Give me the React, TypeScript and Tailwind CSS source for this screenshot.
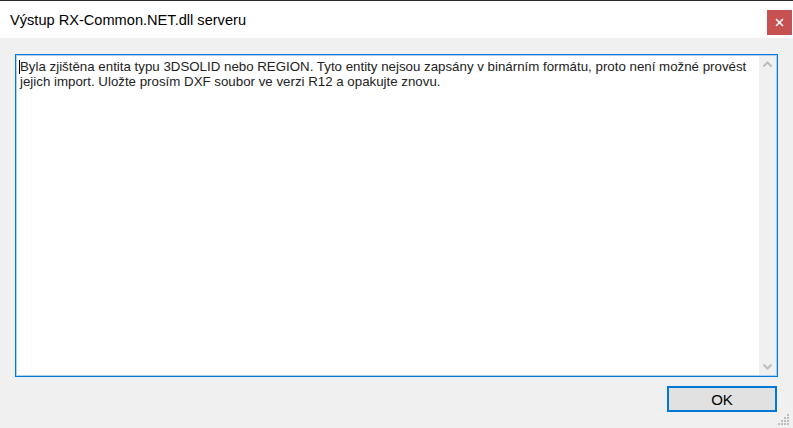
import React from 'react';

export default function App() {
  return (
    <div className="w-[793px] h-[428px] flex flex-col bg-[#f0f0f0] overflow-hidden font-['Liberation_Sans',Arial,sans-serif]">
      {/* Title bar */}
      <div className="h-[38px] bg-white border-t border-[#2b2b2b] flex items-start shrink-0">
        <div className="flex-1 pl-[10px] pt-[10px] text-[14.6px] text-black leading-[18px]">
          Výstup RX-Common.NET.dll serveru
        </div>
        <div className="mt-[9px] mr-[1px] w-[25px] h-[25px] bg-[#c75050] flex items-center justify-center">
          <svg width="9" height="9" viewBox="0 0 9 9">
            <path d="M1 1 L8 8 M8 1 L1 8" stroke="white" strokeWidth="1.6" />
          </svg>
        </div>
      </div>

      {/* Client area */}
      <div className="flex-1 flex flex-col pl-[15px] pr-[15px] pt-[16px]">
        <div className="h-[323px] bg-white border border-[#0078d7] shadow-[inset_0_0_0_1px_#a9cff1] flex">
          <div className="flex-1 relative pl-[4px] pt-[4px] text-[13.3px] leading-[15px] text-[#222]">
            <span className="absolute left-[3px] top-[5px] w-[1px] h-[14px] bg-black" />
            Byla zjištěna entita typu 3DSOLID nebo REGION. Tyto entity nejsou zapsány v binárním formátu, proto není možné provést
            <br />
            jejich import. Uložte prosím DXF soubor ve verzi R12 a opakujte znovu.
          </div>
          <div className="w-[17px] my-[1px] mr-[1px] bg-[#f0f0f0] flex flex-col justify-between items-center">
            <svg width="17" height="17" viewBox="0 0 17 17">
              <path d="M4.5 10.5 L8.5 6.5 L12.5 10.5" stroke="#bdbdbd" strokeWidth="2" fill="none" />
            </svg>
            <svg width="17" height="17" viewBox="0 0 17 17">
              <path d="M4.5 6.5 L8.5 10.5 L12.5 6.5" stroke="#bdbdbd" strokeWidth="2" fill="none" />
            </svg>
          </div>
        </div>

        <div className="flex justify-end mt-[9px] pr-[1px]">
          <button className="w-[110px] h-[26px] bg-[#e1e1e1] border-2 border-[#0078d7] text-[15px] text-black leading-none flex items-center justify-center">
            OK
          </button>
        </div>
      </div>

      {/* Size grip */}
      <div className="relative h-0">
        <svg className="absolute right-[3px] bottom-[2px]" width="12" height="12" viewBox="0 0 12 12">
          {[
            [9, 0],
            [6, 3], [9, 3],
            [3, 6], [6, 6], [9, 6],
            [0, 9], [3, 9], [6, 9], [9, 9],
          ].map(([x, y], i) => (
            <rect key={i} x={x} y={y} width="2" height="2" fill="#bcbcbc" />
          ))}
        </svg>
      </div>
    </div>
  );
}
